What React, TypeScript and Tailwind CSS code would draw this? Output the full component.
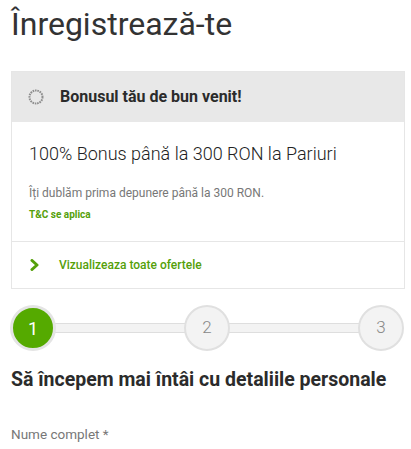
export default function App() {
  return (
    <div className="w-[411px] h-[449px] overflow-hidden bg-white font-['Roboto',sans-serif] text-[#333]">
      <h1 className="pl-[11px] pt-[2px] text-[32px] leading-[44px] font-normal text-[#333]">Înregistrează-te</h1>

      {/* Bonus card */}
      <div className="mx-[11px] mt-[25px] w-[394px] border border-[#e6e6e6]">
        <div className="flex h-[50px] items-center gap-[16px] bg-[#e8e8e8] pl-[16px]">
          <svg width="16" height="16" viewBox="0 0 16 16">
            <circle cx="8" cy="8" r="6.5" fill="none" stroke="#8e8e8e" strokeWidth="2" strokeDasharray="1.6 0.8" />
          </svg>
          <span className="text-[16px] font-bold text-[#2b2b2b]">Bonusul tău de bun venit!</span>
        </div>
        <div className="border-b border-[#e6e6e6] px-[17px] pb-[19px] pt-[20px]">
          <p className="text-[18px] font-light leading-[24px] text-[#222]">100% Bonus până la 300 RON la Pariuri</p>
          <p className="mt-[19px] text-[12px] leading-[16px] text-[#777]">Îți dublăm prima depunere până la 300 RON.</p>
          <p className="mt-[7px] text-[10px] font-bold leading-[14px] text-[#55a00a]">T&amp;C se aplica</p>
        </div>
        <div className="flex h-[46px] items-center pl-[18px]">
          <svg width="10" height="12" viewBox="0 0 10 12" className="mr-[19px]">
            <path d="M2 1.5 L7 6 L2 10.5" fill="none" stroke="#55a00a" strokeWidth="3" strokeLinejoin="round" strokeLinecap="round" />
          </svg>
          <span className="text-[12px] font-medium text-[#55a00a]">Vizualizeaza toate ofertele</span>
        </div>
      </div>

      {/* Stepper */}
      <div className="relative mx-[10px] mt-[16px] flex h-[46px] w-[394px] items-center justify-between">
        <div className="absolute left-[20px] right-[20px] top-[18px] h-[10px] border border-[#dedede] bg-[#f3f3f3]" />
        <div className="relative flex h-[46px] w-[46px] items-center justify-center rounded-full border-[3px] border-[#e4e4e4] bg-[#55aa00] text-[18px] text-white">1</div>
        <div className="relative flex h-[46px] w-[46px] items-center justify-center rounded-full border-2 border-[#e0e0e0] bg-[#f3f3f3] text-[17px] font-light text-[#888]">2</div>
        <div className="relative flex h-[46px] w-[46px] items-center justify-center rounded-full border-2 border-[#e0e0e0] bg-[#f3f3f3] text-[17px] font-light text-[#888]">3</div>
      </div>

      <h2 className="mt-[16px] pl-[11px] text-[19.5px] font-bold leading-[26px] text-[#2b2b2b]">Să începem mai întâi cu detaliile personale</h2>

      <p className="mt-[32px] pl-[11px] text-[13.5px] leading-[18px] text-[#777]">Nume complet *</p>
    </div>
  )
}
